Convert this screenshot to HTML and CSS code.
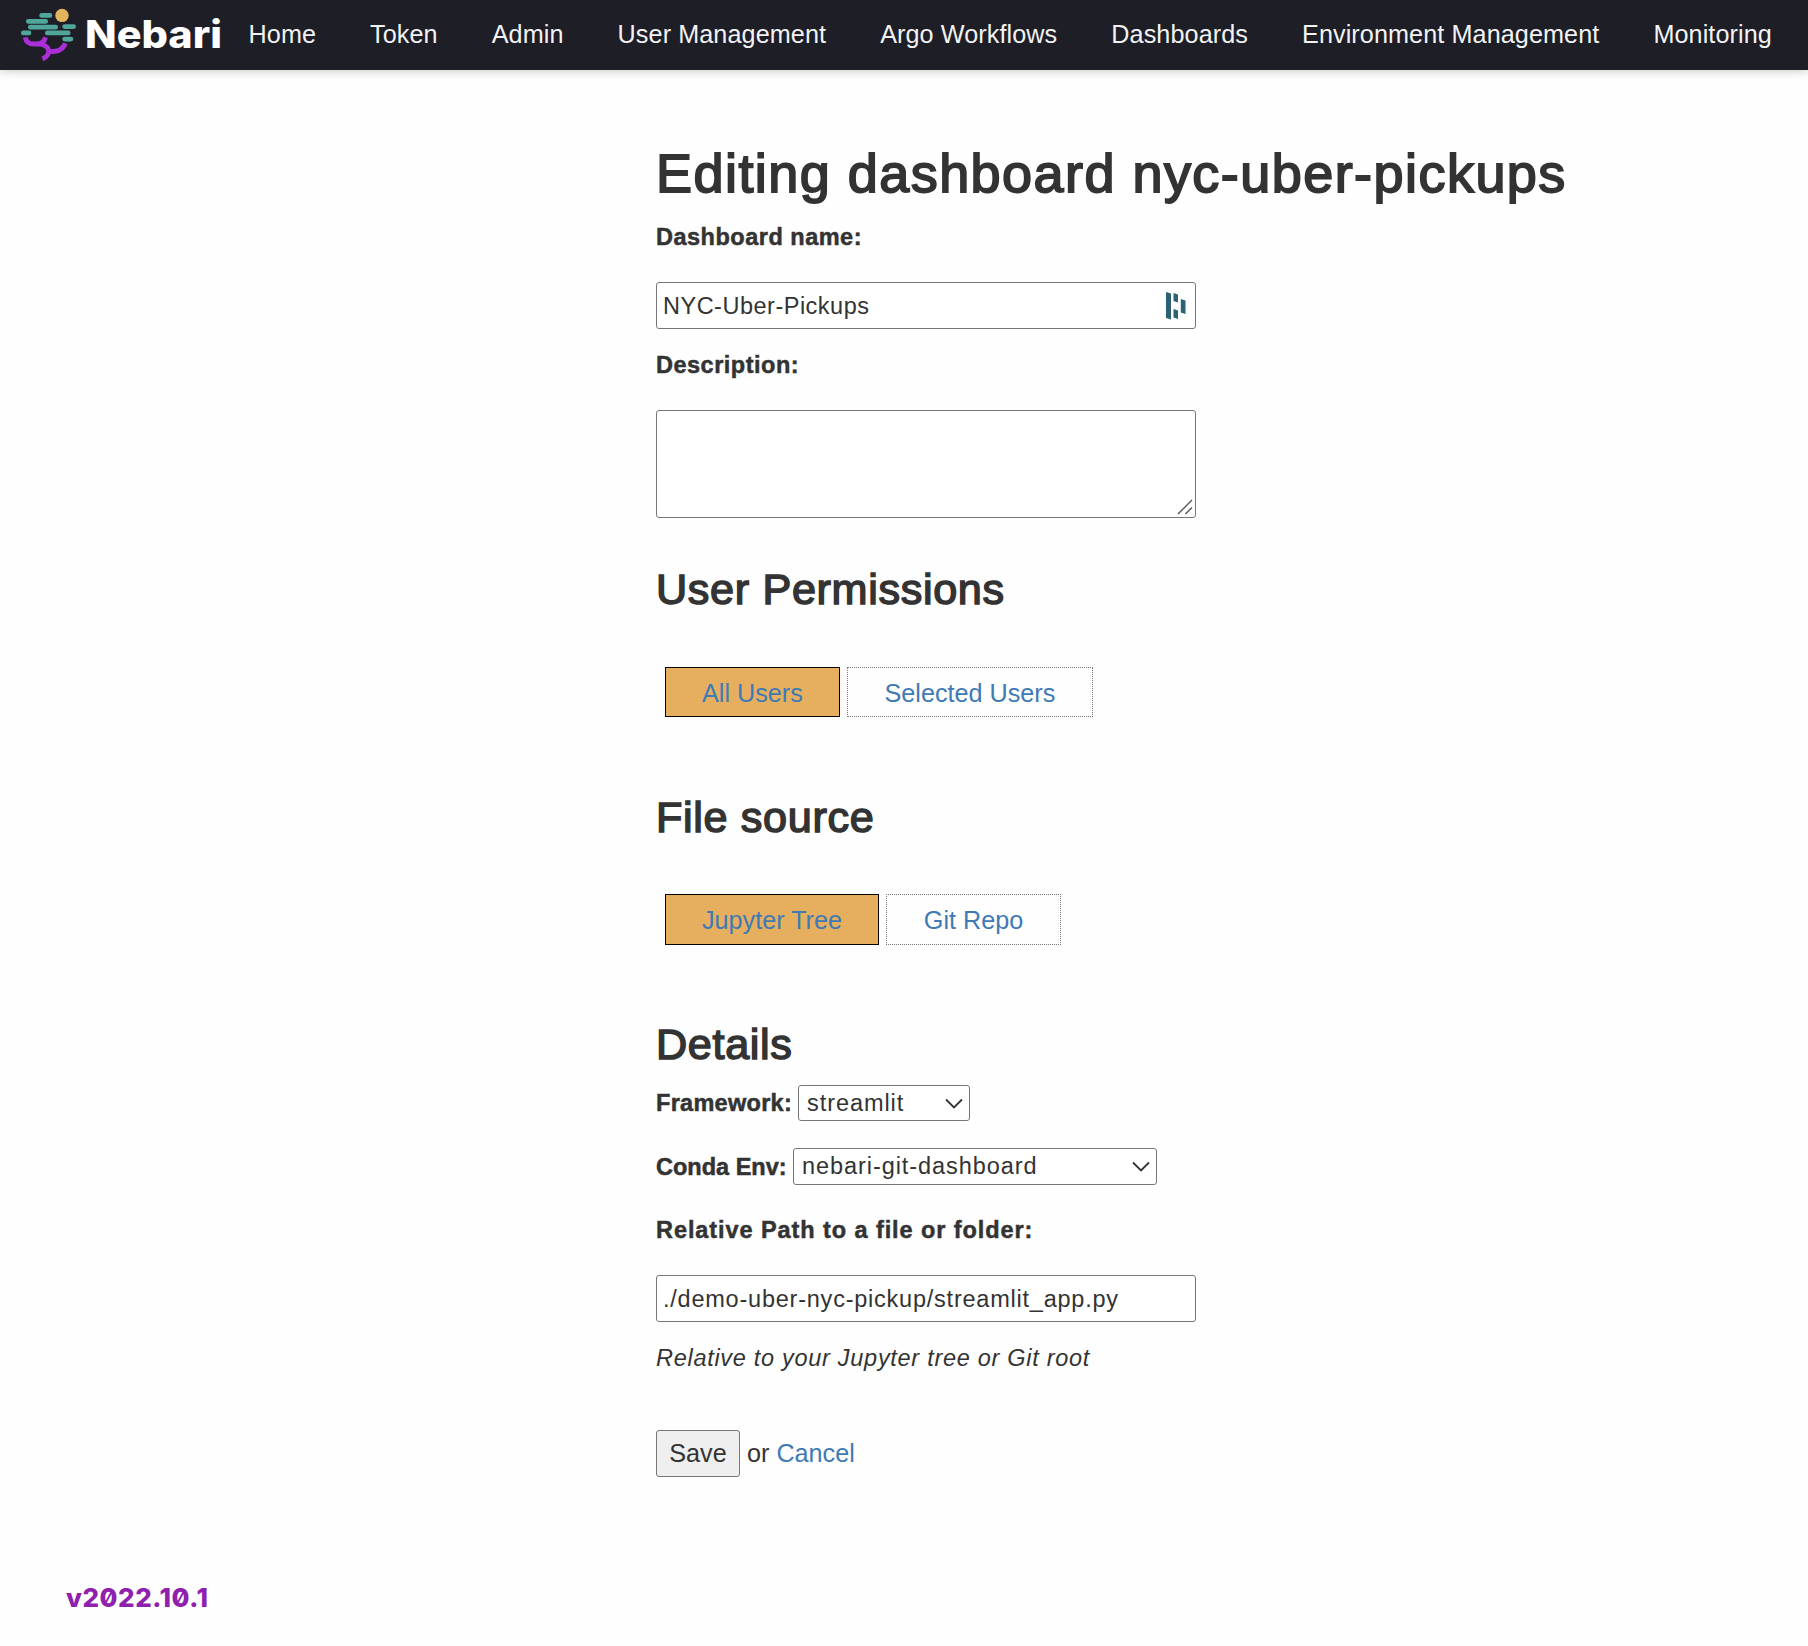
FILE: index.html
```html
<!DOCTYPE html>
<html lang="en">
<head>
<meta charset="utf-8">
<title>Editing dashboard nyc-uber-pickups</title>
<link rel="stylesheet" href="styles.css">
</head>
<body>
<header class="navbar">
  <svg class="logo" width="221" height="70" viewBox="0 0 221 70" role="img" aria-label="Nebari">
    <g fill="#51a69c">
      <rect x="39.3" y="13" width="13" height="4.7" rx="2.3"/>
      <rect x="26" y="19" width="22" height="4.7" rx="2.3"/>
      <rect x="28" y="24.8" width="30" height="4.7" rx="2.3"/>
      <rect x="62.3" y="24.2" width="13.7" height="4.8" rx="2.4"/>
      <rect x="21" y="30.6" width="10.3" height="4.7" rx="2.3"/>
      <rect x="45" y="30.6" width="25.5" height="4.7" rx="2.3"/>
      <rect x="62.3" y="36.7" width="11" height="4.8" rx="2.4"/>
    </g>
    <circle cx="62" cy="15.4" r="6.7" fill="#e3b45d"/>
    <g fill="none" stroke="#ab2fd6" stroke-width="4.8">
      <path d="M25.200 37.300C26 42 29.500 44.200 35 44C43 43.600 48.700 46 48.700 51.500C48.700 54.500 46.500 57 42.500 59"/>
      <path d="M45.600 37.300C44.500 41 41.500 44 37 44.100"/>
      <path d="M65.300 43.200C63.500 49 58 52 48.500 51.600"/>
    </g>
    <text class="logo-text" x="85" y="47.500" textLength="137" lengthAdjust="spacingAndGlyphs">Nebari</text>
  </svg>
  <nav class="links">
    <a>Home</a><a>Token</a><a>Admin</a><a>User Management</a><a>Argo Workflows</a><a>Dashboards</a><a>Environment Management</a><a>Monitoring</a>
  </nav>
</header>
<main class="form">
  <h1 class="title">Editing dashboard nyc-uber-pickups</h1>
  <label class="label name-label">Dashboard name:</label>
  <div class="input"><span class="name-value">NYC-Uber-Pickups</span>
    <svg class="dash-icon" width="20" height="28" viewBox="0 0 20 28" fill="#2d6274">
      <path d="M0 0L5 1.500V27.500L0 26ZM7.500 1L12 2.500V10.500L7.500 9ZM7.500 17L12 18.500V27L7.500 25.500ZM14.800 7L19.500 8.500V22L14.800 20.500Z"/>
    </svg>
  </div>
  <label class="label desc-label">Description:</label>
  <div class="textarea">
    <svg width="16" height="16" viewBox="0 0 16 16" stroke="#555" stroke-width="1.400"><path d="M1 15L15 1M8.500 15L15 8.500"/></svg>
  </div>
  <h2 class="heading">User Permissions</h2>
  <div class="tabs users"><a class="tab active">All Users</a><a class="tab">Selected Users</a></div>
  <h2 class="heading">File source</h2>
  <div class="tabs source"><a class="tab active">Jupyter Tree</a><a class="tab">Git Repo</a></div>
  <h2 class="heading">Details</h2>
  <div class="row framework"><span class="label">Framework:</span>
    <div class="select"><span>streamlit</span><svg width="18" height="11" viewBox="0 0 18 11"><path d="M1 1.500L9 9.500L17 1.500"/></svg></div></div>
  <div class="row conda"><span class="label">Conda Env:</span>
    <div class="select"><span class="env-value">nebari-git-dashboard</span><svg width="18" height="11" viewBox="0 0 18 11"><path d="M1 1.500L9 9.500L17 1.500"/></svg></div></div>
  <label class="label path-label">Relative Path to a file or folder:</label>
  <div class="input"><span class="path-value">./demo-uber-nyc-pickup/streamlit_app.py</span></div>
  <p class="hint">Relative to your Jupyter tree or Git root</p>
  <div class="actions"><button class="save">Save</button><span>or</span><a class="cancel">Cancel</a></div>
</main>
<footer class="version">v2022.10.1</footer>
</body>
</html>
```
FILE: styles.css
```css
* { box-sizing: border-box; }
body { margin: 0; background: #fefefe; color: #333; font: 25.2px "Liberation Sans", Arial, sans-serif; }
.navbar { display: flex; height: 70px; background: #1d1e26; box-shadow: 0 1px 9px rgba(0,0,0,.22); }
.logo { flex: none; overflow: visible; }
.logo-text { font: 800 38px Inter, sans-serif; fill: #fff; }
.links { display: flex; gap: 54px; padding-left: 27.5px; line-height: 69px; letter-spacing: .09px; color: #f2f2f4; white-space: nowrap; }
.form { display: flex; flex-direction: column; margin-left: 656px; padding-top: 73px; }
h1, h2, p { margin: 0; font-weight: 400; }
.title { font-size: 54px; line-height: 60px; letter-spacing: 1.45px; -webkit-text-stroke: 1.8px #333; white-space: nowrap; }
.heading { font-size: 43.2px; line-height: 50px; letter-spacing: .65px; -webkit-text-stroke: 1.5px #333; }
.label { font-size: 23.5px; font-weight: 700; line-height: 36px; letter-spacing: .5px; -webkit-text-stroke: .5px #333; white-space: nowrap; }
.name-label { margin: 16px 0 27px; }
.desc-label { margin: 18px 0 27px; }
.input { display: flex; align-items: center; justify-content: space-between; width: 540px; height: 47px; padding: 0 9px 0 6px; border: 1px solid #767676; border-radius: 3px; background: #fff; font-size: 23.5px; letter-spacing: .5px; white-space: nowrap; }
.input span { padding-top: 2px; }
.path-value { letter-spacing: .77px; }
.textarea { display: flex; align-items: flex-end; justify-content: flex-end; width: 540px; height: 108px; padding: 2px; border: 1px solid #767676; border-radius: 3px; background: #fff; margin-bottom: 46px; }
.tabs { display: flex; gap: 7px; padding-left: 9px; }
.users { height: 50px; margin: 53px 0 75px; }
.source { height: 51px; margin: 52px 0 74px; }
.tab { display: flex; align-items: center; padding: 2px 36.8px 0; border: 1px dotted #777; color: #3f7ab5; }
.active { padding: 2px 36px 0; border: 1px solid #000; background: #e5af5f; }
.row { display: flex; align-items: center; }
.framework { margin-top: 16px; height: 36px; }
.conda { margin-top: 27px; height: 37px; }
.row .label { width: 142px; letter-spacing: .28px; }
.conda .label { width: 137px; letter-spacing: 0; }
.select { display: flex; align-items: center; justify-content: space-between; width: 172px; height: 100%; padding: 0 6px 0 8px; border: 1px solid #767676; border-radius: 3px; background: #fff; font-size: 23.5px; letter-spacing: .93px; }
.conda .select { width: 364px; }
.select path { fill: none; stroke: #333; stroke-width: 1.800; }
.path-label { margin: 27px 0 27px; letter-spacing: .92px; }
.hint { margin-top: 18px; font-size: 23.5px; font-style: italic; line-height: 36px; letter-spacing: .71px; }
.actions { display: flex; align-items: center; gap: 7px; margin-top: 54px; height: 47px; }
.save { width: 84px; height: 47px; padding: 0; border: 1px solid #767676; border-radius: 3px; background: #efefef; color: #333; font: inherit; }
.cancel { color: #3f7ab5; }
.version { margin: 103px 0 0 66px; line-height: 36px; letter-spacing: .5px; font-family: Inter, sans-serif; font-size: 26px; font-weight: 800; font-feature-settings: "zero"; color: #8f21ae; }
```
